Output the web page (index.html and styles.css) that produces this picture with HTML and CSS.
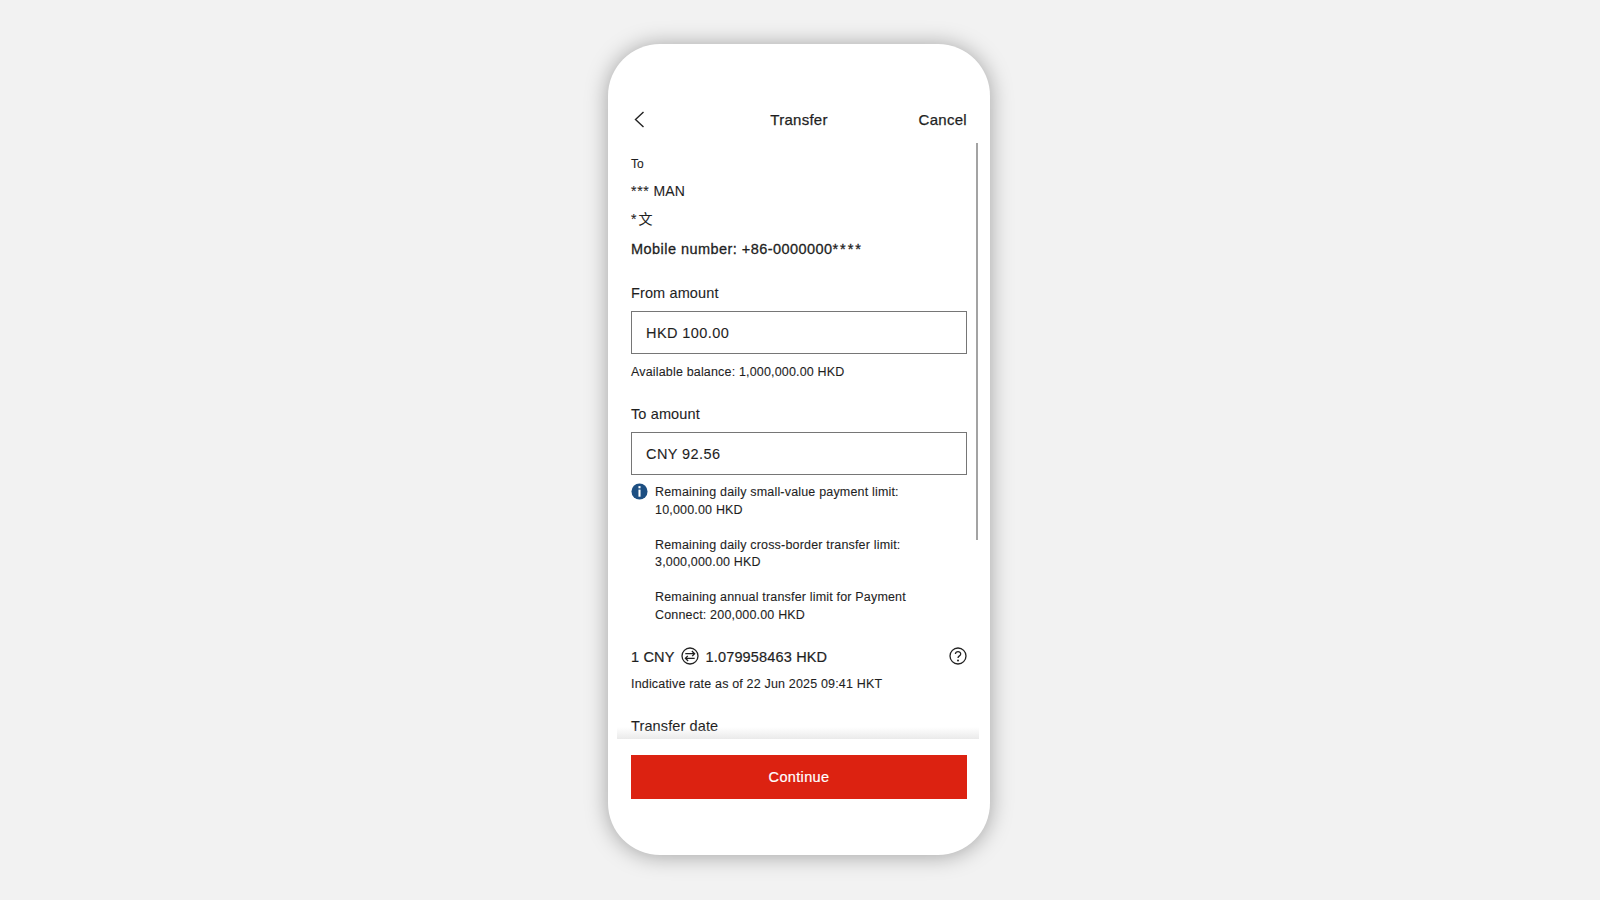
FILE: index.html
```html
<!DOCTYPE html>
<html lang="en">
<head>
  <meta charset="UTF-8" />
  <title>Transfer</title>
  <link rel="stylesheet" href="styles.css">
</head>
<body>
  <div class="phone">
    <header class="top-bar">
      <svg class="back-icon" viewBox="0 0 11 17" aria-label="Back"><path d="M9.5 1 L1.5 8.5 L9.5 16" /></svg>
      <h1 class="title">Transfer</h1>
      <span class="cancel">Cancel</span>
    </header>

    <main class="content">
      <div class="scroll-thumb"></div>
      <p class="to-label">To</p>
      <p class="name name-en"><span class="stars">***</span> MAN</p>
      <p class="name name-cn"><span class="star-one">*</span>文</p>
      <p class="mobile">Mobile number: +86-0000000<span class="mask">****</span></p>

      <label class="field-label from-label">From amount</label>
      <div class="amount-box">HKD 100.00</div>
      <p class="small-note balance">Available balance: 1,000,000.00 HKD</p>

      <label class="field-label to-amount-label">To amount</label>
      <div class="amount-box">CNY 92.56</div>

      <div class="limits">
        <svg class="info-icon" viewBox="0 0 18 18" aria-label="Information">
          <circle cx="9" cy="9" r="8.5" />
          <rect x="7.9" y="3.3" width="2.2" height="2.3" />
          <rect x="7.9" y="7" width="2.2" height="7.5" />
        </svg>
        <div class="limit-list">
          <p>Remaining daily small-value payment limit:<br>10,000.00 HKD</p>
          <p>Remaining daily cross-border transfer limit:<br>3,000,000.00 HKD</p>
          <p>Remaining annual transfer limit for Payment<br>Connect: 200,000.00 HKD</p>
        </div>
      </div>

      <div class="rate-row">
        <span>1 CNY</span>
        <svg class="swap-icon" viewBox="0 0 18 18" aria-label="Exchange">
          <circle cx="9" cy="9" r="8" />
          <path d="M4.3 6.7 H13.5 M10.9 4 L13.6 6.7 L11.2 9.1" />
          <path d="M13.7 11.3 H4.5 M7.1 14 L4.4 11.3 L6.8 8.9" />
        </svg>
        <span>1.079958463 HKD</span>
        <svg class="help-icon" viewBox="0 0 18 18" aria-label="Help">
          <circle cx="9" cy="9" r="8" />
          <path d="M6.4 7 C6.4 3.7 11.7 3.7 11.7 7 C11.7 8.9 9 8.9 9 11" />
          <circle class="dot" cx="9" cy="13.4" r="1" />
        </svg>
      </div>
      <p class="small-note rate-note">Indicative rate as of 22 Jun 2025 09:41 HKT</p>

      <label class="field-label date-label">Transfer date</label>
      <div class="fade"></div>
    </main>

    <footer class="bottom">
      <button class="continue">Continue</button>
    </footer>
  </div>
</body>
</html>
```

FILE: styles.css
```css
* {
  box-sizing: border-box;
}

html, body {
  height: 100%;
}

body {
  margin: 0;
  background-color: #f2f2f2;
  color: #1f1f1f;
  font-family: "Liberation Sans", Arial, "Noto Sans CJK SC", sans-serif;
  overflow: hidden;
  padding: 44px 0 0 608px;
  -webkit-text-stroke: 0.1px #1f1f1f;
}

p {
  margin: 0;
}

.phone {
  width: 382px;
  height: 811px;
  background-color: #fff;
  border-radius: 52px;
  box-shadow: 0 1px 22px rgba(0, 0, 0, 0.34);
  display: flex;
  flex-direction: column;
}

.top-bar {
  height: 99px;
  padding: 66px 23px 0 26px;
  display: flex;
  align-items: flex-start;
  justify-content: space-between;
  position: relative;
}

.back-icon {
  width: 11px;
  height: 17px;
  margin-top: 1px;
}

.back-icon path {
  fill: none;
  stroke: #222;
  stroke-width: 1.4;
}

.title {
  position: absolute;
  left: 0;
  right: 0;
  top: 67px;
  margin: 0;
  text-align: center;
  font-size: 15px;
  font-weight: 400;
  line-height: 18px;
  letter-spacing: 0.25px;
  -webkit-text-stroke: 0.25px #1f1f1f;
}

.cancel {
  font-size: 15px;
  line-height: 18px;
  margin-top: 1px;
  letter-spacing: 0.3px;
  -webkit-text-stroke: 0.25px #1f1f1f;
}

.content {
  flex: 1;
  position: relative;
  overflow: hidden;
  padding: 0 23px;
  min-height: 0;
}

.scroll-thumb {
  position: absolute;
  right: 12px;
  top: 0;
  width: 2px;
  height: 397px;
  background-color: #a3a3a3;
}

.to-label {
  font-size: 12px;
  line-height: 16px;
  padding-top: 13px;
  height: 29px;
}

.name {
  font-size: 14px;
  line-height: 20px;
}

.name-en {
  margin-top: 9px;
  letter-spacing: 0.1px;
}

.stars {
  letter-spacing: 0.7px;
}

.name-cn {
  margin-top: 8px;
}

.star-one {
  margin-right: 2px;
}

.mobile {
  font-size: 14.5px;
  line-height: 20px;
  margin-top: 10px;
  letter-spacing: 0.45px;
  -webkit-text-stroke: 0.3px #1f1f1f;
}

.mask {
  letter-spacing: 1.9px;
}

.field-label {
  display: block;
  font-size: 14.5px;
  line-height: 20px;
  letter-spacing: 0.12px;
}

.from-label {
  margin-top: 24px;
}

.amount-box {
  height: 43px;
  margin: 8px 0 0;
  border: 1px solid #767676;
  padding: 1px 14px 0;
  display: flex;
  align-items: center;
  font-size: 14.5px;
  letter-spacing: 0.42px;
}

.small-note {
  font-size: 12.5px;
  line-height: 18px;
  letter-spacing: 0.17px;
}

.balance {
  margin-top: 9px;
}

.to-amount-label {
  margin-top: 23px;
}

.limits {
  display: flex;
  margin-top: 8px;
  gap: 7px;
}

.info-icon {
  width: 17px;
  height: 17px;
  flex: none;
}

.info-icon circle {
  fill: #1d4f82;
}

.info-icon rect {
  fill: #fff;
}

.limit-list {
  font-size: 12.5px;
  line-height: 17.5px;
  letter-spacing: 0.18px;
  padding-top: 1px;
}

.limit-list p + p {
  margin-top: 17.5px;
}

.rate-row {
  display: flex;
  align-items: center;
  font-size: 14.5px;
  line-height: 20px;
  margin-top: 23px;
  gap: 6px;
  letter-spacing: 0.16px;
  -webkit-text-stroke: 0.2px #1f1f1f;
}

.swap-icon, .help-icon {
  width: 18px;
  height: 18px;
  flex: none;
  margin-bottom: 2px;
}

.swap-icon {
  margin-right: 1px;
}

.swap-icon circle, .help-icon circle, .swap-icon path, .help-icon path {
  fill: none;
  stroke: #222;
  stroke-width: 1.3;
}

.help-icon {
  margin-left: auto;
}

.help-icon .dot {
  fill: #222;
  stroke: none;
}

.rate-note {
  margin-top: 8px;
}

.date-label {
  margin-top: 23px;
}

.fade {
  position: absolute;
  left: 9px;
  right: 11px;
  bottom: 0;
  height: 12px;
  background: linear-gradient(rgba(225, 225, 225, 0), rgba(225, 225, 225, 0.7));
}

.bottom {
  height: 116px;
  padding: 16px 23px 0;
}

.continue {
  display: block;
  width: 100%;
  height: 44px;
  border: none;
  background-color: #dc2211;
  color: #fff;
  font-family: inherit;
  font-size: 14.5px;
  letter-spacing: 0.35px;
  padding-top: 1px;
  -webkit-text-stroke: 0.2px #fff;
}
```
